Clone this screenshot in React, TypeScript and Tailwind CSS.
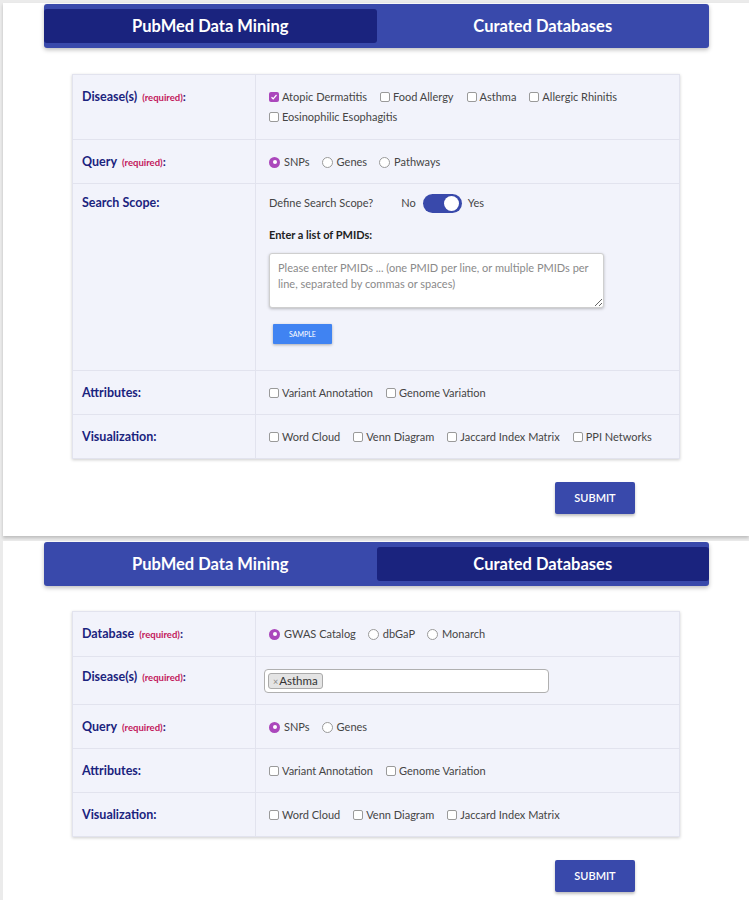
import React from "react";

const FONT = { fontFamily: "Lato, 'Open Sans', sans-serif" };

function Check({ label, checked = false }: { label: string; checked?: boolean }) {
  return (
    <span className="inline-flex shrink-0 items-center gap-[3px] mr-[13px] whitespace-nowrap">
      {checked ? (
        <span className="w-[10px] h-[10px] rounded-[2px] bg-[#ab47bc] flex items-center justify-center">
          <svg width="8" height="8" viewBox="0 0 8 8">
            <path d="M1.5 4.2 L3.2 5.8 L6.5 2" stroke="white" strokeWidth="1.2" fill="none" />
          </svg>
        </span>
      ) : (
        <span className="w-[10px] h-[10px] rounded-[2px] border border-[#9a9a9a] bg-white" />
      )}
      <span>{label}</span>
    </span>
  );
}

function Radio({ label, checked = false }: { label: string; checked?: boolean }) {
  return (
    <span className="inline-flex shrink-0 items-center gap-[4px] mr-[12px] whitespace-nowrap">
      {checked ? (
        <span className="w-[11px] h-[11px] rounded-full bg-[#ab47bc] flex items-center justify-center">
          <span className="w-[4px] h-[4px] rounded-full bg-white" />
        </span>
      ) : (
        <span className="w-[11px] h-[11px] rounded-full border border-[#9a9a9a] bg-white" />
      )}
      <span>{label}</span>
    </span>
  );
}

function Row({
  label,
  required,
  children,
  first,
  labelPad,
}: {
  label: string;
  required?: boolean;
  children: React.ReactNode;
  first?: boolean;
  labelPad?: string;
}) {
  const pad = first ? "pt-[12px] pb-[12px]" : "pt-[12px] pb-[11px]";
  return (
    <div className={`flex ${first ? "" : "border-t border-[#e2e3ee]"}`}>
      <div
        className={`w-[183px] shrink-0 pl-[9px] ${labelPad ?? pad} border-r border-[#e2e3ee] text-[12px] leading-[20px]`}
      >
        <div className="flex items-baseline h-[20px]">
          <span className="text-[12.5px] font-bold text-[#1a237e]">{label}</span>
          {required && (
            <span className="text-[9.5px] font-bold text-[#c2185b] ml-[5px]">(required)</span>
          )}
          {required && <span className="text-[12px] font-bold text-[#1a237e]">:</span>}
        </div>
      </div>
      <div className={`flex-1 pl-[13px] pr-[10px] ${pad} text-[11px] leading-[20px] text-[#454545]`}>
        {children}
      </div>
    </div>
  );
}

function Tabs({ active }: { active: 0 | 1 }) {
  const tabs = ["PubMed Data Mining", "Curated Databases"];
  return (
    <div className="ml-[41px] w-[665px] h-[44px] bg-[#3949ab] rounded-[3px] shadow-[0_2px_4px_rgba(0,0,0,0.25)] py-[5px] flex">
      {tabs.map((t, i) => (
        <div
          key={t}
          className={`flex-1 flex items-center justify-center text-white font-bold text-[16.5px] rounded-[3px] ${
            i === active ? "bg-[#1a237e]" : ""
          }`}
        >
          {t}
        </div>
      ))}
    </div>
  );
}

function Submit() {
  return (
    <div className="flex justify-end w-[632px]">
      <button className="w-[80px] h-[32px] bg-[#3949ab] text-white text-[11px] font-semibold rounded-[2px] shadow-[0_2px_3px_rgba(0,0,0,0.25)]">
        SUBMIT
      </button>
    </div>
  );
}

export default function App() {
  return (
    <div
      className="w-[749px] h-[900px] bg-[#ebebeb] pl-[3px] pt-[3px] flex flex-col gap-[5px] overflow-hidden"
      style={FONT}
    >
      {/* PubMed panel */}
      <div className="bg-white h-[533px] pt-[1px] shadow-[0_2px_3px_rgba(0,0,0,0.2)]">
        <Tabs active={0} />
        <div className="ml-[69px] mt-[26px] w-[608px] bg-[#f2f3fb] border border-[#e2e3ee] shadow-[0_1px_3px_rgba(0,0,0,0.2)]">
          <Row label="Disease(s)" required first>
            <div className="flex flex-wrap">
              <Check label="Atopic Dermatitis" checked />
              <Check label="Food Allergy" />
              <Check label="Asthma" />
              <Check label="Allergic Rhinitis" />
              <Check label="Eosinophilic Esophagitis" />
            </div>
          </Row>
          <Row label="Query" required>
            <div className="flex">
              <Radio label="SNPs" checked />
              <Radio label="Genes" />
              <Radio label="Pathways" />
            </div>
          </Row>
          <Row label="Search Scope:" labelPad="pt-[9px] pb-[11px]">
            <div className="-mt-[3px] pb-[15px]">
              <div className="flex items-center">
                <span>Define Search Scope?</span>
                <span className="ml-[28px]">No</span>
                <span className="ml-[7px] w-[39px] h-[19px] rounded-full bg-[#3949ab] flex items-center justify-end pr-[3px]">
                  <span className="w-[15px] h-[15px] rounded-full bg-white" />
                </span>
                <span className="ml-[6px]">Yes</span>
              </div>
              <div className="mt-[12px] font-bold text-[#222]">Enter a list of PMIDs:</div>
              <textarea
                className="mt-[8px] block w-[335px] h-[55px] bg-white border border-[#cfcfcf] rounded-[3px] shadow-[0_1px_3px_rgba(0,0,0,0.25)] px-[8px] pt-[6px] text-[11px] leading-[16px] placeholder:text-[#8a8a8a]"
                style={FONT}
                placeholder="Please enter PMIDs ... (one PMID per line, or multiple PMIDs per line, separated by commas or spaces)"
              />
              <button className="mt-[16px] ml-[4px] w-[59px] h-[20px] bg-[#4083f2] text-white text-[7px] shadow-[0_1px_3px_rgba(0,0,0,0.3)] rounded-[1px]">
                SAMPLE
              </button>
            </div>
          </Row>
          <Row label="Attributes:">
            <div className="flex">
              <Check label="Variant Annotation" />
              <Check label="Genome Variation" />
            </div>
          </Row>
          <Row label="Visualization:">
            <div className="flex">
              <Check label="Word Cloud" />
              <Check label="Venn Diagram" />
              <Check label="Jaccard Index Matrix" />
              <Check label="PPI Networks" />
            </div>
          </Row>
        </div>
        <div className="mt-[23px]">
          <Submit />
        </div>
      </div>

      {/* Curated panel */}
      <div className="bg-white flex-1 pt-[1px]">
        <Tabs active={1} />
        <div className="ml-[69px] mt-[25px] w-[608px] bg-[#f2f3fb] border border-[#e2e3ee] shadow-[0_1px_3px_rgba(0,0,0,0.2)]">
          <Row label="Database" required first>
            <div className="flex">
              <Radio label="GWAS Catalog" checked />
              <Radio label="dbGaP" />
              <Radio label="Monarch" />
            </div>
          </Row>
          <Row label="Disease(s)" required labelPad="pt-[10px] pb-[11px]">
            <div className="-ml-[5px] w-[285px] h-[24px] bg-white border border-[#b0b0b0] rounded-[4px] flex items-center px-[3px]">
              <span className="inline-flex items-center h-[16px] px-[4px] bg-[#e4e4e4] border border-[#aaaaaa] rounded-[3px] text-[11.5px] text-[#333] leading-none">
                <span className="text-[9px] text-[#888] mr-[1px]">×</span>Asthma
              </span>
            </div>
          </Row>
          <Row label="Query" required>
            <div className="flex">
              <Radio label="SNPs" checked />
              <Radio label="Genes" />
            </div>
          </Row>
          <Row label="Attributes:">
            <div className="flex">
              <Check label="Variant Annotation" />
              <Check label="Genome Variation" />
            </div>
          </Row>
          <Row label="Visualization:">
            <div className="flex">
              <Check label="Word Cloud" />
              <Check label="Venn Diagram" />
              <Check label="Jaccard Index Matrix" />
            </div>
          </Row>
        </div>
        <div className="mt-[23px]">
          <Submit />
        </div>
      </div>
    </div>
  );
}
